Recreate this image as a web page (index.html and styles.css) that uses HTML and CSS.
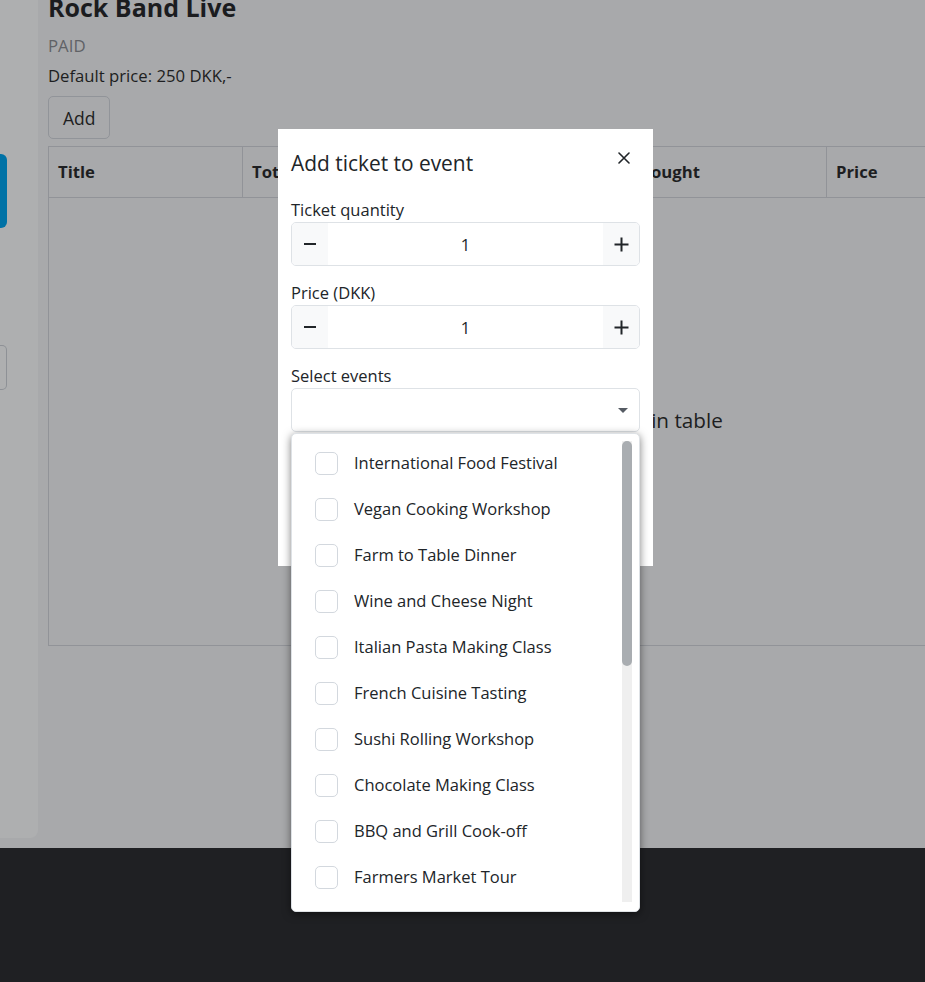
FILE: index.html
```html
<!DOCTYPE html>
<html lang="en">
<head>
<meta charset="utf-8">
<title>Add ticket to event</title>
<link rel="stylesheet" href="styles.css">
</head>
<body>
<div class="page">
  <div class="layout">
    <aside class="sidebar">
      <div class="side-btn"></div>
      <div class="side-outline"></div>
    </aside>
    <main class="main">
      <h1 class="event-title">Rock Band Live</h1>
      <p class="event-type">PAID</p>
      <p class="event-price">Default price: 250 DKK,-</p>
      <button class="btn-add" type="button">Add</button>
      <table class="tickets">
        <thead>
          <tr>
            <th class="col-title">Title</th>
            <th class="col-total">Total tickets</th>
            <th class="col-bought">Tickets bought</th>
            <th class="col-price">Price</th>
          </tr>
        </thead>
        <tbody>
          <tr><td colspan="4" class="empty">No data available in table</td></tr>
        </tbody>
      </table>
    </main>
  </div>
  <footer class="footer"></footer>
</div>

<div class="modal">
  <div class="modal-header">
    <h2 class="modal-title">Add ticket to event</h2>
    <button class="close" type="button" aria-label="Close">
      <svg width="12" height="12" viewBox="0 0 12 12"><path d="M1 1L11 11M11 1L1 11" stroke="#212529" stroke-width="1.6" stroke-linecap="round"/></svg>
    </button>
  </div>
  <div class="modal-body">
    <label class="field-label">Ticket quantity</label>
    <div class="stepper">
      <span class="step-btn"><svg width="14" height="14" viewBox="0 0 14 14"><path d="M1 7H13" stroke="#212529" stroke-width="2"/></svg></span>
      <span class="step-value">1</span>
      <span class="step-btn"><svg width="15" height="15" viewBox="0 0 15 15"><path d="M0.5 7.5H14.5M7.5 0.5V14.5" stroke="#212529" stroke-width="2"/></svg></span>
    </div>
    <label class="field-label">Price (DKK)</label>
    <div class="stepper">
      <span class="step-btn"><svg width="14" height="14" viewBox="0 0 14 14"><path d="M1 7H13" stroke="#212529" stroke-width="2"/></svg></span>
      <span class="step-value">1</span>
      <span class="step-btn"><svg width="15" height="15" viewBox="0 0 15 15"><path d="M0.5 7.5H14.5M7.5 0.5V14.5" stroke="#212529" stroke-width="2"/></svg></span>
    </div>
    <label class="field-label">Select events</label>
    <div class="select">
      <svg class="caret" width="10" height="5" viewBox="0 0 10 5"><path d="M0 0H10L5 5Z" fill="#555b63"/></svg>
    </div>
    <div class="dropdown">
      <ul class="options">
        <li class="option"><span class="check"></span>International Food Festival</li>
        <li class="option"><span class="check"></span>Vegan Cooking Workshop</li>
        <li class="option"><span class="check"></span>Farm to Table Dinner</li>
        <li class="option"><span class="check"></span>Wine and Cheese Night</li>
        <li class="option"><span class="check"></span>Italian Pasta Making Class</li>
        <li class="option"><span class="check"></span>French Cuisine Tasting</li>
        <li class="option"><span class="check"></span>Sushi Rolling Workshop</li>
        <li class="option"><span class="check"></span>Chocolate Making Class</li>
        <li class="option"><span class="check"></span>BBQ and Grill Cook-off</li>
        <li class="option"><span class="check"></span>Farmers Market Tour</li>
        <li class="option"><span class="check"></span>Craft Beer Tasting</li>
        <li class="option"><span class="check"></span>Baking Masterclass</li>
      </ul>
      <div class="scrollbar"><div class="scroll-thumb"></div></div>
    </div>
  </div>
</div>
</body>
</html>
```

FILE: styles.css
```css
* { box-sizing: border-box; }

html, body {
  margin: 0;
  padding: 0;
  width: 925px;
  height: 982px;
  overflow: hidden;
  background: #a8a9ab;
  font-family: "Open Sans", "Noto Sans", sans-serif;
  color: #1d1e21;
}

.page {
  display: flex;
  flex-direction: column;
  height: 982px;
}

.layout {
  display: flex;
  height: 848px;
}

.sidebar {
  width: 38px;
  height: 838px;
  flex: none;
  background: #aeafb0;
  border-bottom-right-radius: 8px;
  padding-top: 154px;
}

.side-btn {
  width: 7px;
  height: 74px;
  background: #0072a6;
  border-radius: 0 6px 6px 0;
}

.side-outline {
  margin-top: 117px;
  width: 7px;
  height: 45px;
  border: 1px solid #8e9196;
  border-left: none;
  border-radius: 0 5px 5px 0;
}

.main {
  flex: 1;
  padding-left: 10px;
  overflow: hidden;
}

.event-title {
  margin: -8px 0 0;
  font-size: 25px;
  font-weight: 700;
  line-height: 30px;
  color: #1b1c1f;
}

.event-type {
  margin: 12px 0 0;
  font-size: 16.8px;
  line-height: 24px;
  color: #606266;
}

.event-price {
  margin: 6px 0 0;
  font-size: 16.7px;
  line-height: 24px;
}

.btn-add {
  margin-top: 8px;
  height: 43px;
  padding: 0 14px;
  font-family: inherit;
  font-size: 17.5px;
  color: #1d1e21;
  background: transparent;
  border: 1px solid #919499;
  border-radius: 5px;
}

.tickets {
  margin-top: 7px;
  width: 1106px;
  border-collapse: collapse;
  border: 1px solid #919398;
}

.tickets th {
  height: 51px;
  padding: 0 9px 2px;
  text-align: left;
  font-size: 16.7px;
  font-weight: 700;
  border: 1px solid #919398;
}

.col-title { width: 194px; }
.col-total { width: 325px; }
.col-bought { width: 259px; }

.empty {
  height: 448px;
  padding-bottom: 4px;
  text-align: center;
  font-size: 20.7px;
  border: 1px solid #919398;
}

.footer {
  flex: 1;
  background: #1f2023;
}

/* modal */
.modal {
  position: absolute;
  left: 278px;
  top: 129px;
  width: 375px;
  height: 437px;
  background: #fff;
  color: #212529;
  padding: 0 13px;
}

.modal-header {
  display: flex;
  justify-content: space-between;
  align-items: flex-start;
  padding-top: 20px;
}

.modal-title {
  margin: 0;
  font-size: 20.9px;
  font-weight: 400;
  line-height: 28px;
}

.close {
  margin: 3px 10px 0 0;
  padding: 0;
  border: none;
  background: none;
  width: 12px;
  height: 12px;
  display: flex;
}

.modal-body {
  padding-top: 20px;
  position: relative;
}

.field-label {
  display: block;
  font-size: 16.5px;
  line-height: 25px;
}

.stepper {
  display: flex;
  height: 44px;
  border: 1px solid #dee2e6;
  border-radius: 5px;
  overflow: hidden;
  margin-bottom: 14px;
}

.step-btn {
  width: 36px;
  flex: none;
  display: flex;
  align-items: center;
  justify-content: center;
  background: #f8f9fa;
}

.step-value {
  flex: 1;
  display: flex;
  align-items: center;
  justify-content: center;
  font-size: 16.5px;
}

.select {
  height: 44px;
  border: 1px solid #dee2e6;
  border-radius: 5px;
  display: flex;
  align-items: center;
  justify-content: flex-end;
  padding-right: 11px;
}

.caret { display: block; margin-top: 1px; }

.dropdown {
  position: absolute;
  left: 0;
  right: 0;
  margin-top: 1px;
  height: 479px;
  display: flex;
  background: #fff;
  border: 1px solid #dee2e6;
  border-radius: 5px;
  box-shadow: 0 2px 8px rgba(0, 0, 0, 0.5);
  padding: 7px 7px 9px 0;
  z-index: 2;
}

.options {
  list-style: none;
  margin: 0;
  padding: 0;
  flex: 1;
  overflow: hidden;
}

.scrollbar {
  width: 10px;
  flex: none;
  background: #efefef;
}

.scroll-thumb {
  height: 225px;
  background: #a9adb1;
  border-radius: 5px;
}

.option {
  height: 46px;
  display: flex;
  align-items: center;
  padding-left: 23px;
  padding-bottom: 3px;
  font-size: 16.5px;
  color: #212529;
}

.check {
  width: 23px;
  height: 23px;
  border: 1.5px solid #d3d8de;
  border-radius: 5px;
  margin-right: 16px;
  margin-top: 2px;
  flex: none;
}
```
